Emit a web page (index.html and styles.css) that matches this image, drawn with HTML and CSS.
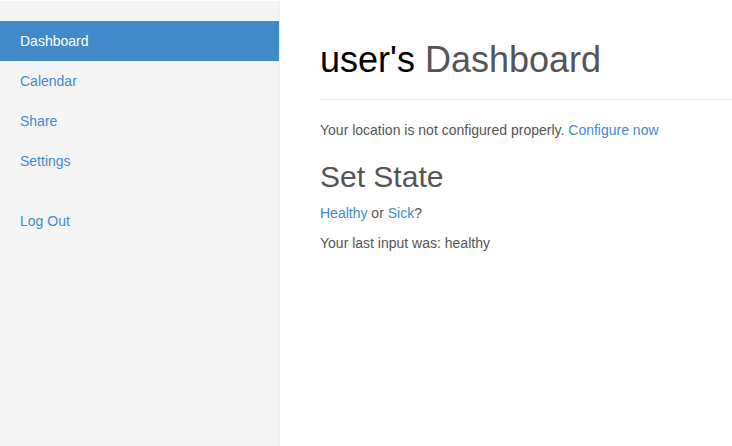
FILE: index.html
```html
<!DOCTYPE html>
<html>
<head>
<meta charset="utf-8">
<link rel="stylesheet" href="styles.css">
</head>
<body>
<div class="layout">
  <aside class="sidebar">
    <ul class="nav">
      <li><a class="active" href="#">Dashboard</a></li>
      <li><a href="#">Calendar</a></li>
      <li><a href="#">Share</a></li>
      <li><a href="#">Settings</a></li>
    </ul>
    <ul class="nav">
      <li><a href="#">Log Out</a></li>
    </ul>
  </aside>
  <main class="main">
    <div class="page-header">
      <h1><span class="user">user's</span> Dashboard</h1>
    </div>
    <p>Your location is not configured properly. <a href="#">Configure now</a></p>
    <h2>Set State</h2>
    <p><a href="#">Healthy</a> or <a href="#">Sick</a>?</p>
    <p>Your last input was: healthy</p>
  </main>
</div>
</body>
</html>
```
FILE: styles.css
```css
* { box-sizing: border-box; }
html, body { margin: 0; padding: 0; height: 100%; }
body {
  font-family: "Liberation Sans", Arial, sans-serif;
  font-size: 14px;
  line-height: 20px;
  color: #555;
  background: #fff;
  overflow: hidden;
}
a { color: #428bca; text-decoration: none; }
.layout {
  display: flex;
  height: 100%;
  padding-top: 1px;
}
.sidebar {
  width: 280px;
  flex: none;
  background: #f4f4f4;
  border-right: 1px solid #eee;
  padding-top: 20px;
}
.nav {
  list-style: none;
  margin: 0 0 20px 0;
  padding: 0;
}
.nav a {
  display: block;
  padding: 10px 20px;
  line-height: 20px;
}
.nav a.active {
  background: #428bca;
  color: #fff;
}
.main {
  flex: 1;
  padding: 0 0 0 40px;
  min-width: 0;
}
.page-header {
  margin: 39px 0 20px 0;
  padding-bottom: 9px;
  border-bottom: 1px solid #eee;
}
.page-header h1 {
  margin: 0 0 10px 0;
  font-size: 36px;
  font-weight: 500;
  line-height: 39.6px;
  color: #555;
}
.user { color: #000; }
p { margin: 0 0 10px 0; }
h2 {
  margin: 20px 0 10px 0;
  font-size: 30px;
  font-weight: 500;
  line-height: 33px;
  color: #555;
}
```
